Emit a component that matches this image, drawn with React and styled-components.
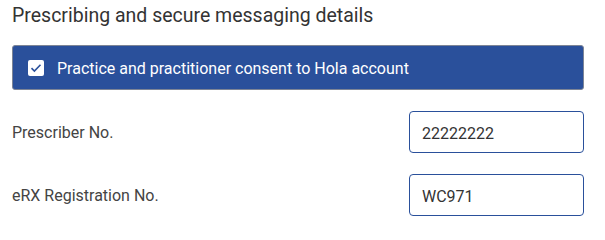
import React from "react";
import styled, { createGlobalStyle } from "styled-components";

const GlobalStyle = createGlobalStyle`
  body {
    margin: 0;
    background: #fff;
    font-family: Roboto, "Liberation Sans", Arial, sans-serif;
  }
`;

const Section = styled.section`
  width: 572px;
  padding: 4px 0 0 12px;
`;

const Title = styled.h2`
  margin: 0;
  font-size: 19.5px;
  line-height: 23px;
  font-weight: 400;
  color: #333;
`;

const ConsentBar = styled.label`
  display: flex;
  align-items: center;
  gap: 13px;
  box-sizing: border-box;
  height: 45px;
  margin-top: 18px;
  padding: 1px 15px 0;
  background: #2a509b;
  border: 1px solid #7d8596;
  border-radius: 3px;
  color: #fff;
  font-size: 16px;
  cursor: pointer;
`;

const CheckBox = styled.span`
  display: flex;
  align-items: center;
  justify-content: center;
  width: 16px;
  height: 16px;
  background: #fff;
  border-radius: 2px;
  flex-shrink: 0;
`;

const Fields = styled.div`
  display: flex;
  flex-direction: column;
  gap: 21px;
  margin-top: 21px;
`;

const Row = styled.div`
  display: flex;
  align-items: center;
  justify-content: space-between;
`;

const Label = styled.label`
  font-size: 16px;
  color: #444;
`;

const Input = styled.input`
  box-sizing: border-box;
  width: 175px;
  height: 42px;
  padding: 2px 12px 0;
  border: 1px solid #2a509b;
  border-radius: 4px;
  outline: none;
  font-family: inherit;
  font-size: 16px;
  color: #333;
  background: #fff;
`;

const fields = [
  { id: "prescriber", label: "Prescriber No.", value: "22222222" },
  { id: "erx", label: "eRX Registration No.", value: "WC971" },
];

export default function App() {
  return (
    <>
      <GlobalStyle />
      <Section>
        <Title>Prescribing and secure messaging details</Title>
        <ConsentBar>
          <CheckBox>
            <svg width="12" height="10" viewBox="0 0 12 10">
              <path
                d="M1.5 5.2 L4.4 8 L10.5 1.8"
                fill="none"
                stroke="#2a509b"
                strokeWidth="1.6"
              />
            </svg>
          </CheckBox>
          Practice and practitioner consent to Hola account
        </ConsentBar>
        <Fields>
          {fields.map((f) => (
            <Row key={f.id}>
              <Label htmlFor={f.id}>{f.label}</Label>
              <Input id={f.id} defaultValue={f.value} />
            </Row>
          ))}
        </Fields>
      </Section>
    </>
  );
}
